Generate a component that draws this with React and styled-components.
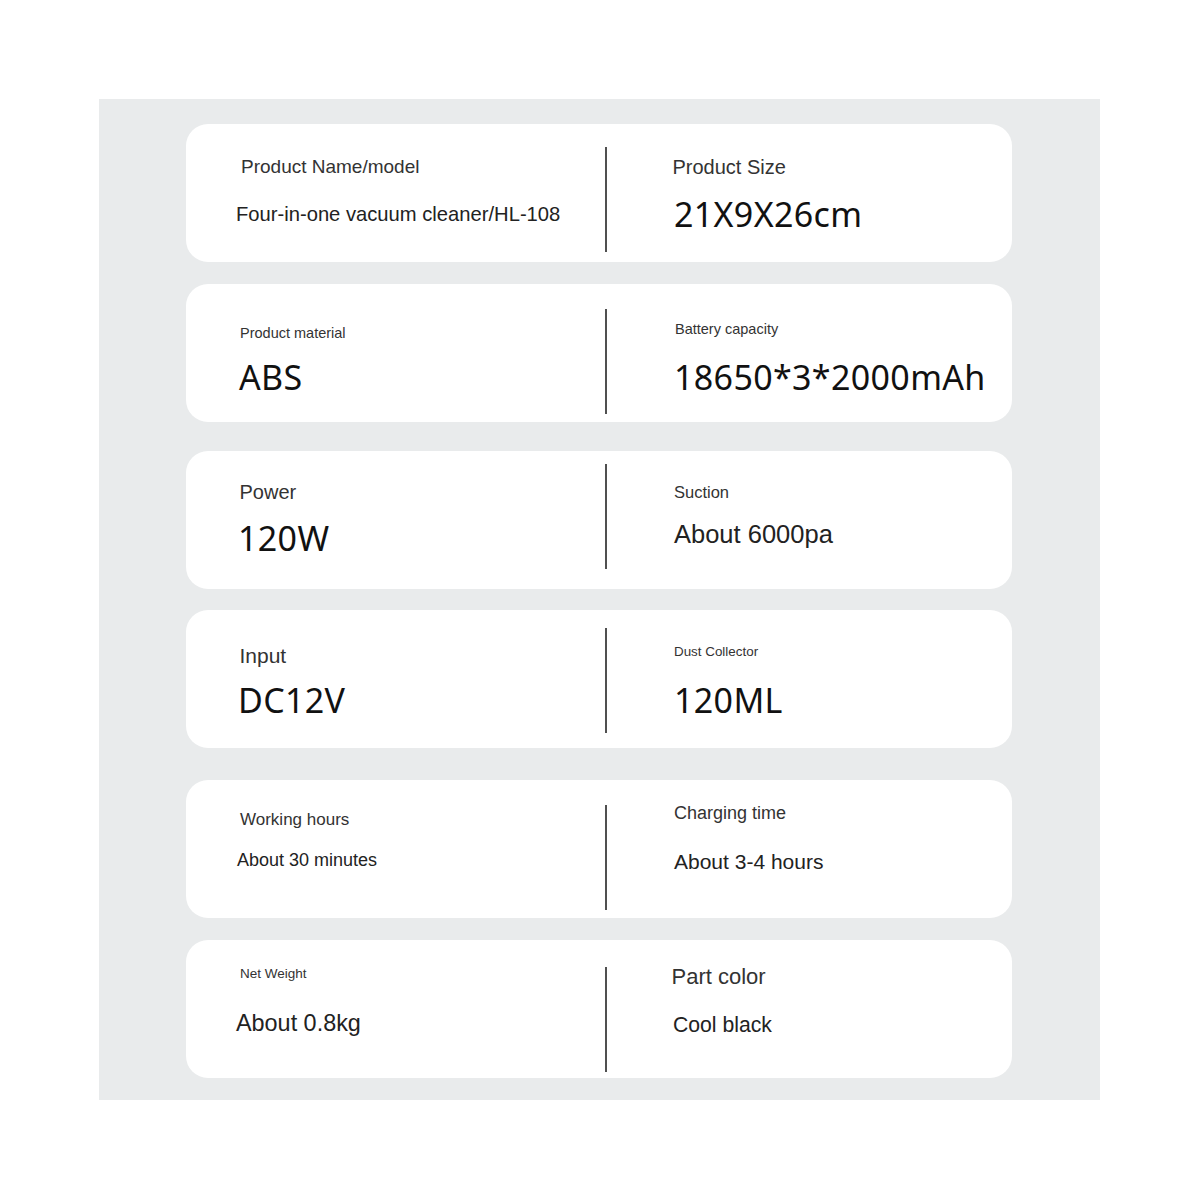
import styled, { createGlobalStyle } from 'styled-components';

const GlobalStyle = createGlobalStyle`
  body {
    margin: 0;
    background: #ffffff;
    font-family: 'Liberation Sans', Arial, sans-serif;
  }
`;

const Page = styled.div`
  width: 1200px;
  height: 1200px;
  padding: 99px 0 0 99px;
  box-sizing: border-box;
`;

const Panel = styled.div`
  width: 1001px;
  height: 1001px;
  box-sizing: border-box;
  padding: 25px 0 0 87px;
  background: #e9ebec;
  display: flex;
  flex-direction: column;
`;

const Card = styled.div`
  width: 826px;
  height: 138px;
  margin-top: ${props => props.$offset}px;
  background: #ffffff;
  border-radius: 22px;
  display: grid;
  grid-template-columns: 419px 2px 1fr;
`;

const Divider = styled.div`
  align-self: start;
  margin-top: ${props => props.$top}px;
  height: 105px;
  background: #505050;
`;

const Cell = styled.div`
  display: flex;
  flex-direction: column;
  align-items: flex-start;
  padding: 1.5px 0 0 1px;
`;

const Label = styled.div`
  margin-top: ${props => props.$top}px;
  margin-left: ${props => props.$left}px;
  font-size: ${props => props.$size}px;
  line-height: 1;
  color: #333333;
  white-space: nowrap;
`;

const Value = styled.div`
  margin-top: ${props => props.$gap}px;
  margin-left: ${props => props.$left}px;
  font-size: ${props => props.$size}px;
  line-height: 1;
  white-space: nowrap;
  color: ${props => (props.$big ? '#111111' : '#222222')};
  font-family: ${props =>
    props.$big ? "'Noto Sans', 'DejaVu Sans', sans-serif" : "'Liberation Sans', Arial, sans-serif"};
  letter-spacing: ${props => (props.$big ? '0.35px' : 'normal')};
`;

const rows = [
  {
    offset: 0,
    divider: 23,
    cells: [
      { label: 'Product Name/model', ls: 19, lt: 31.5, ll: 54, value: 'Four-in-one vacuum cleaner/HL-108', vs: 20.2, vt: 78.4, vl: 49 },
      { label: 'Product Size', ls: 20, lt: 31.4, ll: 64.5, value: '21X9X26cm', vs: 34, vt: 72, vl: 66, big: true },
    ],
  },
  {
    offset: 22,
    divider: 25,
    cells: [
      { label: 'Product material', ls: 14.5, lt: 40, ll: 53, value: 'ABS', vs: 34, vt: 74, vl: 52, big: true },
      { label: 'Battery capacity', ls: 14.5, lt: 36, ll: 67, value: '18650*3*2000mAh', vs: 34, vt: 74, vl: 66, big: true },
    ],
  },
  {
    offset: 29,
    divider: 13,
    cells: [
      { label: 'Power', ls: 20, lt: 29.4, ll: 52.5, value: '120W', vs: 34, vt: 69, vl: 51, big: true },
      { label: 'Suction', ls: 16.5, lt: 31, ll: 66, value: 'About 6000pa', vs: 25.5, vt: 69.7, vl: 66 },
    ],
  },
  {
    offset: 21,
    divider: 18,
    cells: [
      { label: 'Input', ls: 21, lt: 33, ll: 52.5, value: 'DC12V', vs: 34, vt: 71, vl: 51, big: true },
      { label: 'Dust Collector', ls: 13.4, lt: 33, ll: 66, value: '120ML', vs: 34, vt: 71, vl: 66, big: true },
    ],
  },
  {
    offset: 32,
    divider: 25,
    cells: [
      { label: 'Working hours', ls: 17, lt: 29.8, ll: 53, value: 'About 30 minutes', vs: 18, vt: 69.7, vl: 50 },
      { label: 'Charging time', ls: 18, lt: 22.7, ll: 66, value: 'About 3-4 hours', vs: 21, vt: 69.3, vl: 66 },
    ],
  },
  {
    offset: 22,
    divider: 27,
    cells: [
      { label: 'Net Weight', ls: 13.5, lt: 25, ll: 53, value: 'About 0.8kg', vs: 23.4, vt: 70, vl: 49 },
      { label: 'Part color', ls: 22, lt: 24, ll: 63.5, value: 'Cool black', vs: 21.2, vt: 72, vl: 65 },
    ],
  },
];

const SpecCell = ({ cell }) => (
  <Cell>
    <Label $top={cell.lt} $left={cell.ll} $size={cell.ls}>
      {cell.label}
    </Label>
    <Value $gap={cell.vt - cell.lt - cell.ls} $left={cell.vl} $size={cell.vs} $big={cell.big}>
      {cell.value}
    </Value>
  </Cell>
);

const App = () => (
  <Page>
    <GlobalStyle />
    <Panel>
      {rows.map((row, i) => (
        <Card key={i} $offset={row.offset}>
          <SpecCell cell={row.cells[0]} />
          <Divider $top={row.divider} />
          <SpecCell cell={row.cells[1]} />
        </Card>
      ))}
    </Panel>
  </Page>
);

export default App;
